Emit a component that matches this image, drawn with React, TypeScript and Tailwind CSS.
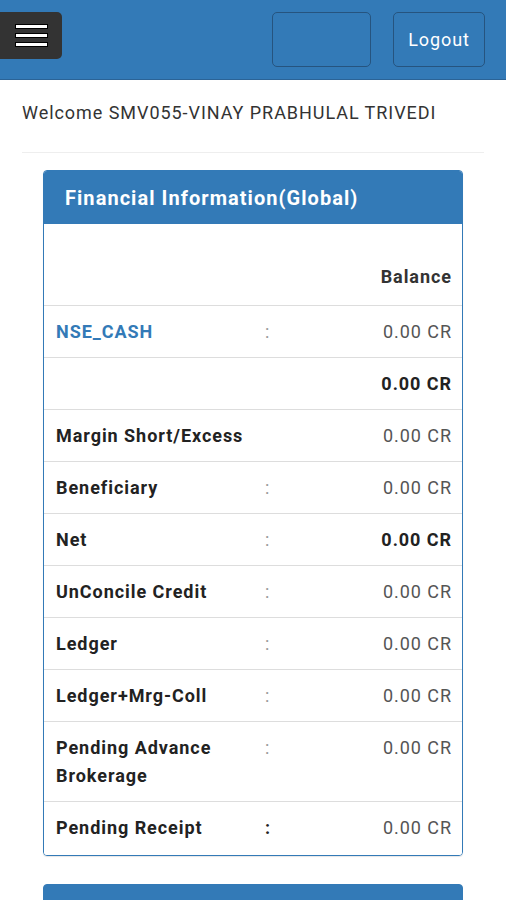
import React from 'react';

type Row = {
  label: string;
  colon?: 'light' | 'bold' | 'none';
  value: string;
  strongValue?: boolean;
  link?: boolean;
};

const rows: Row[] = [
  { label: 'NSE_CASH', colon: 'light', value: '0.00 CR', link: true },
  { label: '', colon: 'none', value: '0.00 CR', strongValue: true },
  { label: 'Margin Short/Excess', colon: 'none', value: '0.00 CR' },
  { label: 'Beneficiary', colon: 'light', value: '0.00 CR' },
  { label: 'Net', colon: 'light', value: '0.00 CR', strongValue: true },
  { label: 'UnConcile Credit', colon: 'light', value: '0.00 CR' },
  { label: 'Ledger', colon: 'light', value: '0.00 CR' },
  { label: 'Ledger+Mrg-Coll', colon: 'light', value: '0.00 CR' },
  { label: 'Pending Advance Brokerage', colon: 'light', value: '0.00 CR' },
  { label: 'Pending Receipt', colon: 'bold', value: '0.00 CR' },
];

const App: React.FC = () => {
  return (
    <div className="min-h-[900px] bg-white font-['Roboto','Liberation_Sans',sans-serif] tracking-[0.95px] text-[#333]">
      {/* top bar */}
      <div className="flex h-[80px] items-start border-b border-[#2b6396] bg-[#337ab7] pt-[12px]">
        <button className="ml-[-6px] flex h-[47px] w-[68px] flex-col items-center justify-center gap-[6px] rounded-[5px] bg-[#333] pl-[6px]">
          <span className="block h-[3px] w-[31px] bg-white shadow-[0_0_0_1px_#000]" />
          <span className="block h-[3px] w-[31px] bg-white shadow-[0_0_0_1px_#000]" />
          <span className="block h-[3px] w-[31px] bg-white shadow-[0_0_0_1px_#000]" />
        </button>
        <div className="ml-auto flex gap-[22px] pr-[21px]">
          <button className="h-[55px] w-[99px] rounded-[5px] border border-[#26547f] bg-[#337ab7]" />
          <button className="h-[55px] w-[92px] rounded-[5px] border border-[#26547f] bg-[#337ab7] text-[18px] tracking-[0.9px] text-white">
            Logout
          </button>
        </div>
      </div>

      <div className="px-[22px]">
        <p className="pt-[21px] text-[18px] leading-[24px] text-[#333]">
          Welcome SMV055-VINAY PRABHULAL TRIVEDI
        </p>
        <hr className="mt-[27px] border-t border-[#eee]" />
      </div>

      {/* panel */}
      <div className="mx-[43px] mt-[17px] overflow-hidden rounded-[4px] border border-[#337ab7] shadow-[0_1px_1px_rgba(0,0,0,0.1)]">
        <div className="flex h-[53px] items-center bg-[#337ab7] px-[21px]">
          <h3 className="text-[20px] font-bold tracking-[1.05px] text-white">Financial Information(Global)</h3>
        </div>
        <div className="bg-white pb-[2px] text-[18px]">
          <div className="flex h-[81px] items-end justify-end pr-[10px] pb-[14px]">
            <span className="font-bold leading-[28px] text-[#333]">Balance</span>
          </div>
          {rows.map((r, i) => (
            <div
              key={i}
              className="grid grid-cols-[209px_1fr_auto] border-t border-[#ddd] pt-[12px] pr-[10px] pb-[11px] pl-[12px] leading-[28px]"
            >
              <span
                className={
                  r.link
                    ? 'font-bold text-[#337ab7]'
                    : 'pr-[8px] font-bold text-[#222]'
                }
              >
                {r.label}
              </span>
              <span
                className={
                  r.colon === 'bold'
                    ? 'font-bold text-[#222]'
                    : r.colon === 'light'
                      ? 'text-[#999]'
                      : ''
                }
              >
                {r.colon === 'none' ? '' : ':'}
              </span>
              <span className={r.strongValue ? 'text-right font-bold text-[#222]' : 'text-right text-[#555]'}>
                {r.value}
              </span>
            </div>
          ))}
        </div>
      </div>

      {/* next panel, cut off at the bottom */}
      <div className="mx-[43px] mt-[28px] h-[40px] rounded-t-[4px] border border-[#337ab7] bg-[#337ab7]" />
    </div>
  );
};

export default App;
